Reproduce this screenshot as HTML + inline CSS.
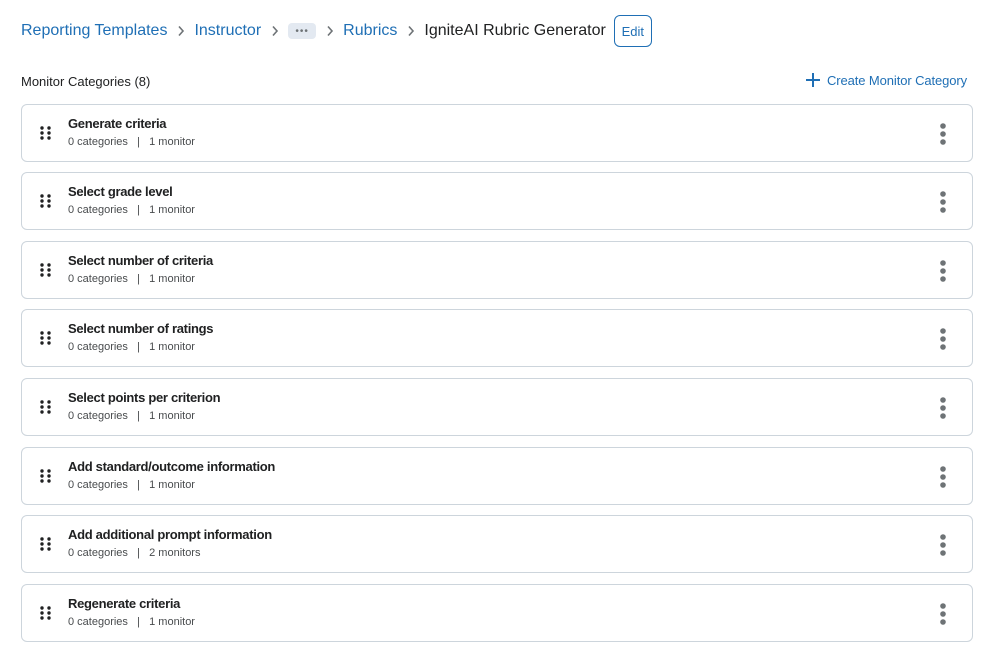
<!DOCTYPE html>
<html><head><style>
body{margin:0;width:999px;height:650px;background:#fff;font-family:"Liberation Sans",sans-serif;position:relative;overflow:hidden;color:#202122}
.bc{position:absolute;top:15px;left:21px;height:32px;font-size:16px;display:flex;align-items:center;white-space:nowrap}
.bc a{color:#1f6fb5;text-decoration:none}
.sep{margin:0 9px 0 10px;display:inline-flex}
.dots{background:#e3e9f1;color:#6e7376;border-radius:4px;width:28px;height:16px;display:inline-flex;align-items:center;justify-content:center;font-size:10px;letter-spacing:1px}
.edit{border:1px solid #1f6fb5;border-radius:6px;color:#1f6fb5;font-size:13px;height:30px;width:36px;display:inline-flex;align-items:center;justify-content:center;margin-left:8px}
.h{position:absolute;top:74px;left:21px;font-size:13px;color:#202122}
.create{position:absolute;top:72px;left:805px;color:#1f6fb5;font-size:13px;display:flex;align-items:center;letter-spacing:-0.1px}
.card{position:absolute;left:21px;width:950px;height:56px;border:1px solid #cdd5dc;border-radius:6px}
.grip{position:absolute;left:18px;top:21px;width:11px;height:14px}
.t{position:absolute;left:46px;top:11px;font-size:13px;font-weight:bold;color:#202122;letter-spacing:-0.3px}
.s{position:absolute;left:46px;top:31px;font-size:11px;color:#494c4e}
.k{position:absolute;right:26px;top:18px}
</style></head><body>
<div class="bc"><a>Reporting Templates</a><span class="sep"><svg width="8" height="12" viewBox="0 0 8 12"><path d="M2 1.5l4 4.5-4 4.5" fill="none" stroke="#6e7376" stroke-width="1.6"/></svg></span><a>Instructor</a><span class="sep"><svg width="8" height="12" viewBox="0 0 8 12"><path d="M2 1.5l4 4.5-4 4.5" fill="none" stroke="#6e7376" stroke-width="1.6"/></svg></span><span class="dots">•••</span><span class="sep"><svg width="8" height="12" viewBox="0 0 8 12"><path d="M2 1.5l4 4.5-4 4.5" fill="none" stroke="#6e7376" stroke-width="1.6"/></svg></span><a>Rubrics</a><span class="sep"><svg width="8" height="12" viewBox="0 0 8 12"><path d="M2 1.5l4 4.5-4 4.5" fill="none" stroke="#6e7376" stroke-width="1.6"/></svg></span><span>IgniteAI Rubric Generator</span><span class="edit">Edit</span></div>
<div class="h">Monitor Categories (8)</div>
<div class="create"><svg width="16" height="16" viewBox="0 0 16 16" style="margin-right:6px"><path d="M8 1v14M1 8h14" stroke="#1f6fb5" stroke-width="2"/></svg>Create Monitor Category</div>
<div id="list"></div>
<script>
var items=[["Generate criteria","1 monitor"],["Select grade level","1 monitor"],["Select number of criteria","1 monitor"],["Select number of ratings","1 monitor"],["Select points per criterion","1 monitor"],["Add standard/outcome information","1 monitor"],["Add additional prompt information","2 monitors"],["Regenerate criteria","1 monitor"]];
var tops=[104,172,241,309,378,447,515,584],h="";
items.forEach(function(it,i){h+='<div class="card" style="top:'+tops[i]+'px"><svg class="grip" viewBox="0 0 11 14"><g fill="#202122"><circle cx="2" cy="2" r="1.7"/><circle cx="9" cy="2" r="1.7"/><circle cx="2" cy="7" r="1.7"/><circle cx="9" cy="7" r="1.7"/><circle cx="2" cy="12" r="1.7"/><circle cx="9" cy="12" r="1.7"/></g></svg><div class="t">'+it[0]+'</div><div class="s">0 categories &nbsp;&nbsp;|&nbsp;&nbsp; '+it[1]+'</div><svg class="k" width="6" height="22" viewBox="0 0 6 22"><g fill="#6e7376"><circle cx="3" cy="3" r="2.8"/><circle cx="3" cy="11" r="2.8"/><circle cx="3" cy="19" r="2.8"/></g></svg></div>'});
document.getElementById('list').innerHTML=h;
</script>
</body></html>
